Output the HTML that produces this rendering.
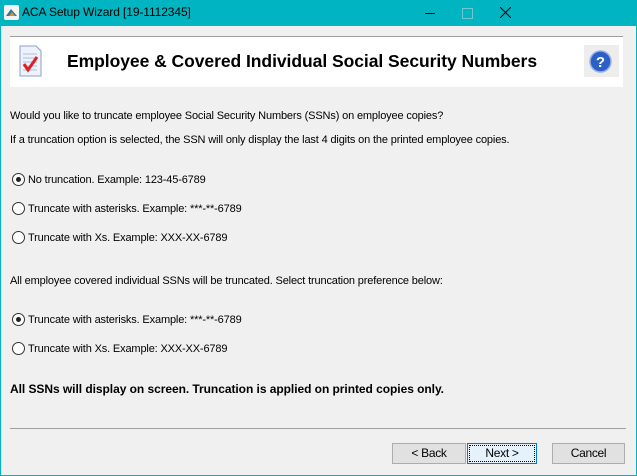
<!DOCTYPE html>
<html><head><style>
body{margin:0;width:637px;height:476px;overflow:hidden;background:#f0f0f0;font-family:"Liberation Sans",sans-serif;position:relative}
.win{position:absolute;left:0;top:0;width:635px;height:474px;border:1px solid #00b4c2;}
.tb{position:absolute;left:0;top:0;width:637px;height:26px;background:#00b4c2;color:#000;font-size:12px}
.t{position:absolute;font-size:11px;letter-spacing:-0.15px;color:#000;white-space:nowrap}
.r{position:absolute;width:11px;height:11px;border:1px solid #333;border-radius:50%;background:#fff}
.r.on::after{content:"";position:absolute;left:3px;top:3px;width:5px;height:5px;border-radius:50%;background:#222}
.btn{position:absolute;top:443px;height:19px;border:1px solid #adadad;background:#e1e1e1;font-size:12px;text-align:center;line-height:19px;letter-spacing:-0.3px}
</style></head><body>
<div class="tb">
<svg style="position:absolute;left:4px;top:5px" width="15" height="15"><rect x="0" y="0" width="15" height="15" rx="2" fill="#f4f4f4"/><path d="M2 11 L7 4 L13 11 Z" fill="#2a7a9a"/><path d="M5 11 L8 7 L11 11Z" fill="#e98a2a"/></svg>
<div style="position:absolute;left:22px;top:5px;font-size:12px;letter-spacing:-0.1px">ACA Setup Wizard [19-1112345]</div>
<div style="position:absolute;left:425px;top:13px;width:10px;height:1px;background:#000"></div>
<div style="position:absolute;left:462px;top:8px;width:9px;height:9px;border:1px solid #6bc9d0"></div>
<svg style="position:absolute;left:500px;top:7px" width="11" height="11"><path d="M0 0L11 11M11 0L0 11" stroke="#000" stroke-width="1"/></svg>
</div>
<div class="win"></div>
<div style="position:absolute;left:10px;top:36px;width:613px;height:50px;background:#fff;border-top:1px solid #a0a0a0"></div>
<svg style="position:absolute;left:19px;top:45px" width="23" height="33"><path d="M1 1H17L22 6V31H1Z" fill="#eef2fa" stroke="#8aa0c8"/><path d="M4 9H18M4 13H18M4 17H18M4 21H18M4 25H18" stroke="#a8bde0"/><path d="M5 19L9 25L18 12" stroke="#e02020" stroke-width="3" fill="none"/></svg>
<div style="position:absolute;left:67px;top:51px;font-size:17.5px;font-weight:bold;letter-spacing:-0.05px">Employee &amp; Covered Individual Social Security Numbers</div>
<div style="position:absolute;left:584px;top:45px;width:35px;height:32px;background:#ededed"></div>
<svg style="position:absolute;left:589px;top:50px" width="23" height="23"><circle cx="11.5" cy="11.5" r="10.5" fill="#2c5fc8" stroke="#9ab0e0" stroke-width="1.5"/><text x="11.5" y="17" text-anchor="middle" font-family="Liberation Sans" font-weight="bold" font-size="15" fill="#fff">?</text></svg>
<div class="t" style="left:10px;top:110px">Would you like to truncate employee Social Security Numbers (SSNs) on employee copies?</div>
<div class="t" style="left:10px;top:134px">If a truncation option is selected, the SSN will only display the last 4 digits on the printed employee copies.</div>
<div class="r on" style="left:12px;top:173px"></div><div class="t" style="left:28px;top:174px">No truncation. Example: 123-45-6789</div>
<div class="r" style="left:12px;top:202px"></div><div class="t" style="left:28px;top:203px">Truncate with asterisks. Example: ***-**-6789</div>
<div class="r" style="left:12px;top:231px"></div><div class="t" style="left:28px;top:232px">Truncate with Xs. Example: XXX-XX-6789</div>
<div class="t" style="left:10px;top:275px">All employee covered individual SSNs will be truncated. Select truncation preference below:</div>
<div class="r on" style="left:12px;top:313px"></div><div class="t" style="left:28px;top:314px">Truncate with asterisks. Example: ***-**-6789</div>
<div class="r" style="left:12px;top:342px"></div><div class="t" style="left:28px;top:343px">Truncate with Xs. Example: XXX-XX-6789</div>
<div class="t" style="left:10px;top:382px;font-weight:bold;font-size:12px;letter-spacing:-0.05px">All SSNs will display on screen. Truncation is applied on printed copies only.</div>
<div style="position:absolute;left:10px;top:428px;width:616px;height:1px;background:#a0a0a0"></div>
<div class="btn" style="left:392px;width:72px">&lt; Back</div>
<div class="btn" style="left:467px;width:68px;border-color:#0078d7;background:#e5f1fb;outline:1px dotted #000;outline-offset:-3px">Next &gt;</div>
<div class="btn" style="left:552px;width:71px">Cancel</div>
</body></html>
